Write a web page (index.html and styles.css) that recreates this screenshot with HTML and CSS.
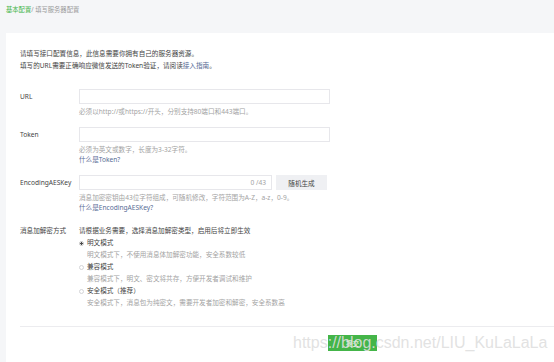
FILE: index.html
```html
<!DOCTYPE html>
<html lang="zh-CN">
<head>
  <meta charset="UTF-8" />
  <title>填写服务器配置</title>
  <link rel="stylesheet" href="styles.css">
</head>
<body>

  <div class="page">
    <div class="crumb">
      <a class="crumb-link" href="#">基本配置</a>/ 填写服务器配置
    </div>

    <div class="card">
      <p class="intro">
        请填写接口配置信息，此信息需要你拥有自己的服务器资源。<br>
        填写的URL需要正确响应微信发送的Token验证，请阅读<a class="link" href="#">接入指南</a>。
      </p>

      <div class="form">
        <div class="row">
          <label class="label" for="url">URL</label>
          <div class="field">
            <input class="input" type="text" id="url" />
            <p class="hint">必须以http://或https://开头，分别支持80端口和443端口。</p>
          </div>
        </div>

        <div class="row">
          <label class="label" for="token">Token</label>
          <div class="field">
            <input class="input" type="text" id="token" />
            <p class="hint">必须为英文或数字，长度为3-32字符。</p>
            <a class="link hint-link" href="#">什么是Token?</a>
          </div>
        </div>

        <div class="row">
          <label class="label" for="aeskey">EncodingAESKey</label>
          <div class="field">
            <div class="inline">
              <div class="input-box">
                <input type="text" id="aeskey" />
                <span class="counter">0 /43</span>
              </div>
              <button class="btn" type="button">随机生成</button>
            </div>
            <p class="hint">消息加密密钥由43位字符组成，可随机修改，字符范围为A-Z，a-z，0-9。</p>
            <a class="link hint-link" href="#">什么是EncodingAESKey?</a>
          </div>
        </div>

        <div class="row row-mode">
          <span class="label">消息加解密方式</span>
          <div class="field">
            <p class="mode-tip">请根据业务需要，选择消息加解密类型，启用后将立即生效</p>

            <div class="option"><span class="radio checked"></span>明文模式</div>
            <p class="option-desc">明文模式下，不使用消息体加解密功能，安全系数较低</p>

            <div class="option"><span class="radio"></span>兼容模式</div>
            <p class="option-desc">兼容模式下，明文、密文将共存，方便开发者调试和维护</p>

            <div class="option"><span class="radio"></span>安全模式（推荐）</div>
            <p class="option-desc">安全模式下，消息包为纯密文，需要开发者加密和解密，安全系数高</p>
          </div>
        </div>
      </div>

      <div class="footer">
        <button class="btn-primary" type="button">提交</button>
      </div>
    </div>
  </div>

  <div class="watermark">https://blog.csdn.net/LIU_KuLaLaLa</div>

</body>
</html>
```

FILE: styles.css
```css
html, body {
  margin: 0;
  padding: 0;
  background: #f5f6f8;
  font-family: "Noto Sans", "Noto Sans CJK SC", sans-serif;
  font-size: 6.6px;
  color: #444;
}

.page {
  display: flex;
  flex-direction: column;
  min-height: 100vh;
  padding-left: 6px;
  box-sizing: border-box;
}

/* breadcrumb */
.crumb {
  height: 33px;
  padding-top: 6px;
  line-height: 8px;
  font-size: 6.3px;
  color: #9a9a9a;
  box-sizing: border-box;
}

.crumb-link {
  color: #44b549;
  text-decoration: none;
}

.card {
  flex: 1;
  background: #fff;
  padding: 15px 0 0 14px;
}

.intro {
  margin: 0;
  line-height: 12px;
}

.link {
  color: #576b95;
  text-decoration: none;
}

.form {
  margin-top: 17px;
}

.row {
  display: flex;
  margin-bottom: 10px;
}

.label {
  width: 59px;
  flex-shrink: 0;
  line-height: 15px;
}

.field {
  width: 251px;
}

.input {
  display: block;
  width: 100%;
  height: 15px;
  margin: 0;
  padding: 0 4px;
  border: 1px solid #e7e7eb;
  box-sizing: border-box;
  font: inherit;
  outline: none;
}

.hint {
  margin: 3px 0 0;
  line-height: 10px;
  color: #a3a3a3;
  white-space: nowrap;
}

.hint-link {
  display: block;
  line-height: 10px;
}

/* aes key */
.inline {
  display: flex;
  gap: 4px;
}

.input-box {
  display: flex;
  align-items: center;
  width: 193px;
  height: 15px;
  border: 1px solid #e7e7eb;
  box-sizing: border-box;
}

.input-box input {
  flex: 1;
  min-width: 0;
  height: 100%;
  border: none;
  padding: 0 4px;
  font: inherit;
  outline: none;
  background: transparent;
}

.counter {
  padding-right: 5px;
  color: #a3a3a3;
}

.btn {
  width: 51px;
  height: 15px;
  padding: 0;
  border: none;
  background: #eff0f3;
  color: #444;
  font: inherit;
}

/* encryption mode */
.row-mode {
  margin-top: 12px;
  margin-bottom: 0;
}

.row-mode .label {
  line-height: 12px;
}

.row-mode .field {
  width: auto;
}

.mode-tip {
  margin: 0;
  line-height: 12px;
}

.option {
  display: flex;
  align-items: center;
  gap: 3px;
  line-height: 12px;
}

.radio {
  width: 5px;
  height: 5px;
  border: 1px solid #d4d5d8;
  border-radius: 50%;
  box-sizing: border-box;
}

.radio.checked {
  border-color: #c3c3c3;
  background: radial-gradient(circle, #4a4a4a 0 1.1px, #fff 1.4px);
}

.option-desc {
  margin: 0 0 1px;
  padding-left: 8px;
  line-height: 11px;
  color: #a3a3a3;
}

.footer {
  margin-top: 17px;
  padding-top: 8px;
  border-top: 1px solid #ececef;
}

.btn-primary {
  margin-left: 308px;
  width: 49px;
  height: 16px;
  padding: 0;
  border: none;
  background: #44b549;
  color: #fff;
  font: inherit;
}

.watermark {
  position: absolute;
  left: 293px;
  top: 335px;
  font-family: "Liberation Sans", Arial, sans-serif;
  font-size: 16px;
  line-height: 16px;
  color: rgba(222, 222, 222, 0.9);
  white-space: nowrap;
  pointer-events: none;
}
```
